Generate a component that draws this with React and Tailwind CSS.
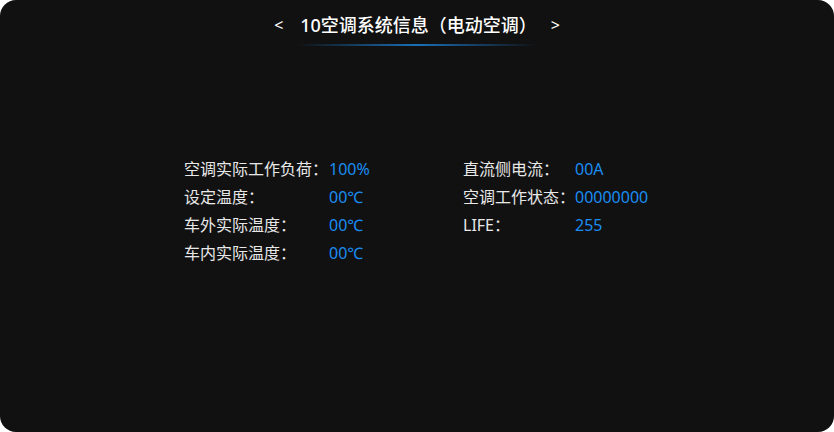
const LEFT = [
  { label: '空调实际工作负荷：', value: '100%' },
  { label: '设定温度：', value: '00℃' },
  { label: '车外实际温度：', value: '00℃' },
  { label: '车内实际温度：', value: '00℃' },
];

const RIGHT = [
  { label: '直流侧电流：', value: '00A' },
  { label: '空调工作状态：', value: '00000000' },
  { label: 'LIFE：', value: '255' },
];

const Row = ({ label, value, labelW }) => (
  <div className="flex items-center h-[28px]">
    <span className={`${labelW} text-[#e8e8e8]`}>{label}</span>
    <span className="text-[#1b8cf2]">{value}</span>
  </div>
);

export default function App() {
  return (
    <div className="w-[834px] h-[432px] bg-white">
      <div
        className="w-full h-full rounded-[16px] bg-[#111111] flex flex-col"
        style={{ fontFamily: '"Noto Sans", "Noto Sans CJK SC", sans-serif' }}
      >
        {/* 标题 */}
        <div className="flex flex-col items-center pt-[12px]">
          <div className="flex items-center h-[26px] text-white">
            <span className="text-[16px] w-[26px]">&lt;</span>
            <span className="text-[18px] font-medium">10空调系统信息（电动空调）</span>
            <span className="text-[16px] w-[23px] text-right">&gt;</span>
          </div>
          <div className="mt-[6px] w-[240px] h-[2px] bg-gradient-to-r from-transparent via-[#1a6fb8] to-transparent" />
        </div>

        <div className="flex justify-center pt-[109px] text-[16px]">
          <div className="w-[279px] flex flex-col">
            {LEFT.map((r) => (
              <Row key={r.label} {...r} labelW="w-[145px]" />
            ))}
          </div>
          <div className="w-[187px] flex flex-col">
            {RIGHT.map((r) => (
              <Row key={r.label} {...r} labelW="w-[112px]" />
            ))}
          </div>
        </div>
      </div>
    </div>
  );
}
